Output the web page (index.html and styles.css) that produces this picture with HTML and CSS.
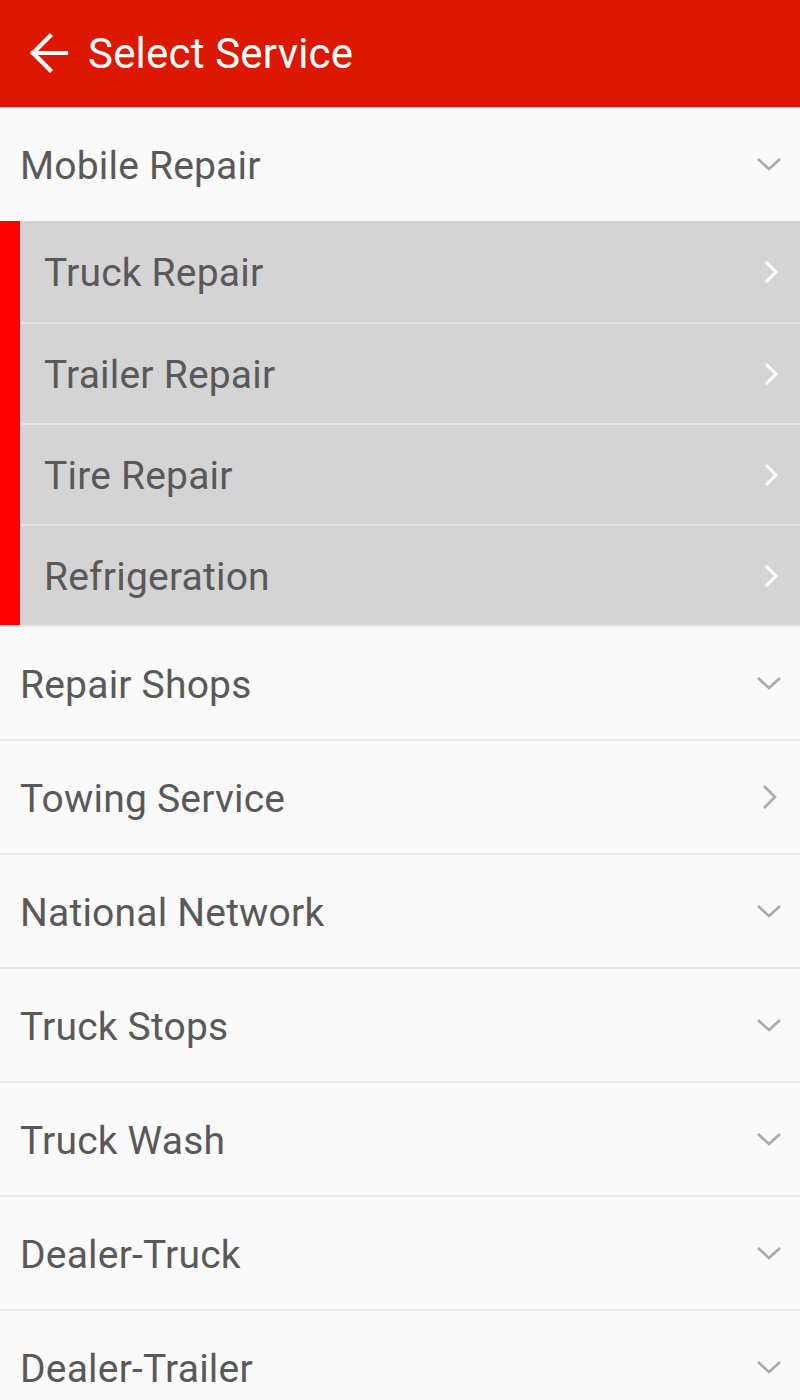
FILE: index.html
```html
<!DOCTYPE html>
<html>
<head>
<meta charset="utf-8">
<link rel="stylesheet" href="styles.css">
</head>
<body>
<header class="appbar">
  <svg class="back" width="40" height="44" viewBox="0 0 40 44"><path d="M37 22H4M21 5L4 22l17 17" fill="none" stroke="#fff" stroke-width="4.2" stroke-linecap="square"/></svg>
  <h1 class="title">Select Service</h1>
</header>
<main class="list">
  <div class="row"><span class="label">Mobile Repair</span><svg class="chev-down" width="26" height="14" viewBox="0 0 26 14"><path d="M2 2l11 10L24 2" fill="none" stroke="#aaa" stroke-width="2.6"/></svg></div>
  <div class="group">
    <div class="sub"><span class="label">Truck Repair</span><svg class="chev-right" width="14" height="24" viewBox="0 0 14 24"><path d="M2 2l10 10L2 22" fill="none" stroke="#fff" stroke-width="3"/></svg></div>
    <div class="sub"><span class="label">Trailer Repair</span><svg class="chev-right" width="14" height="24" viewBox="0 0 14 24"><path d="M2 2l10 10L2 22" fill="none" stroke="#fff" stroke-width="3"/></svg></div>
    <div class="sub"><span class="label">Tire Repair</span><svg class="chev-right" width="14" height="24" viewBox="0 0 14 24"><path d="M2 2l10 10L2 22" fill="none" stroke="#fff" stroke-width="3"/></svg></div>
    <div class="sub"><span class="label">Refrigeration</span><svg class="chev-right" width="14" height="24" viewBox="0 0 14 24"><path d="M2 2l10 10L2 22" fill="none" stroke="#fff" stroke-width="3"/></svg></div>
  </div>
  <div class="row sep"><span class="label">Repair Shops</span><svg class="chev-down" width="26" height="14" viewBox="0 0 26 14"><path d="M2 2l11 10L24 2" fill="none" stroke="#aaa" stroke-width="2.6"/></svg></div>
  <div class="row sep"><span class="label">Towing Service</span><svg class="chev-right" width="16" height="26" viewBox="0 0 16 26"><path d="M2 2l11 11L2 24" fill="none" stroke="#aaa" stroke-width="2.6"/></svg></div>
  <div class="row sep"><span class="label">National Network</span><svg class="chev-down" width="26" height="14" viewBox="0 0 26 14"><path d="M2 2l11 10L24 2" fill="none" stroke="#aaa" stroke-width="2.6"/></svg></div>
  <div class="row sep"><span class="label">Truck Stops</span><svg class="chev-down" width="26" height="14" viewBox="0 0 26 14"><path d="M2 2l11 10L24 2" fill="none" stroke="#aaa" stroke-width="2.6"/></svg></div>
  <div class="row sep"><span class="label">Truck Wash</span><svg class="chev-down" width="26" height="14" viewBox="0 0 26 14"><path d="M2 2l11 10L24 2" fill="none" stroke="#aaa" stroke-width="2.6"/></svg></div>
  <div class="row sep"><span class="label">Dealer-Truck</span><svg class="chev-down" width="26" height="14" viewBox="0 0 26 14"><path d="M2 2l11 10L24 2" fill="none" stroke="#aaa" stroke-width="2.6"/></svg></div>
  <div class="row sep"><span class="label">Dealer-Trailer</span><svg class="chev-down" width="26" height="14" viewBox="0 0 26 14"><path d="M2 2l11 10L24 2" fill="none" stroke="#aaa" stroke-width="2.6"/></svg></div>
</main>
</body>
</html>
```
FILE: styles.css
```css
html, body {
  margin: 0;
  padding: 0;
  background: #fafafa;
  font-family: Roboto, "Noto Sans", sans-serif;
}
.appbar {
  height: 107px;
  background: #dd1800;
  display: flex;
  align-items: center;
  padding-left: 29px;
  box-sizing: border-box;
}
.back { display: block; margin-right: 19px; margin-top: -2px; }
.title {
  margin: 0;
  color: #fff;
  font-weight: 400;
  font-size: 42px;
  letter-spacing: 0.2px;
}
.list { display: flex; flex-direction: column; }
.row {
  height: 114px;
  display: flex;
  align-items: center;
  justify-content: space-between;
  padding: 4px 18px 0 20px;
  box-sizing: border-box;
  background: #fafafa;
}
.row.sep { border-top: 2px solid #e8e8e8; }
.label {
  font-size: 39px;
  color: #595959;
  letter-spacing: 0.2px;
}
.row .chev-down { margin-top: -4px; }
.group {
  border-left: 20px solid #ff0000;
  background: #d4d4d4;
  display: flex;
  flex-direction: column;
}
.sub {
  height: 101px;
  display: flex;
  align-items: center;
  justify-content: space-between;
  padding: 2px 22px 0 24px;
  box-sizing: border-box;
}
.sub + .sub { border-top: 2px solid #e2e2e2; }
.chev-right { display: block; }
.sub .chev-right { margin-top: -2px; }
.row .chev-right { margin-right: 4px; margin-top: -4px; }
```
